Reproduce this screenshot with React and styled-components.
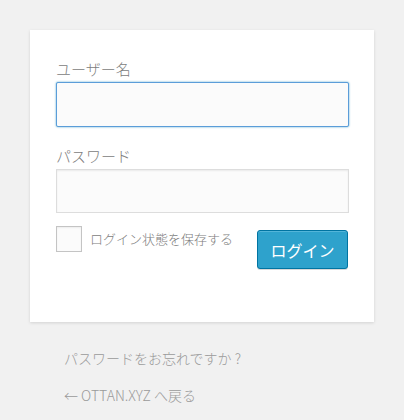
import React from "react";
import styled, { createGlobalStyle } from "styled-components";

const Global = createGlobalStyle`
  html, body { margin: 0; padding: 0; background: #f1f1f1; }
  body { font-family: "Noto Sans CJK JP", "Noto Sans", sans-serif; }
  * { box-sizing: border-box; }
`;

const Page = styled.div`
  padding: 30px 30px 0 30px;
  width: 404px;
`;

const Card = styled.form`
  width: 344px;
  height: 292px;
  background: #fff;
  box-shadow: 0 1px 3px rgba(0, 0, 0, 0.13);
  padding: 29px 25px 0 26px;
  display: flex;
  flex-direction: column;
`;

const Label = styled.label`
  display: block;
  font-size: 15px;
  line-height: 20px;
  font-weight: 300;
  color: #7c7c7c;
  margin-top: ${(p) => p.$mt || 0}px;
`;

const Input = styled.input`
  display: block;
  width: 293px;
  height: ${(p) => (p.$focused ? 45 : 44)}px;
  margin-top: 3px;
  background: #fbfbfb;
  border: 1px solid ${(p) => (p.$focused ? "#5b9dd9" : "#dddddd")};
  border-radius: ${(p) => (p.$focused ? "2px" : "0")};
  box-shadow: ${(p) =>
    p.$focused ? "0 0 2px rgba(30,140,190,0.8)" : "inset 0 1px 2px rgba(0,0,0,0.07)"};
  outline: none;
  font-size: 22px;
  padding: 3px 6px;
`;

const Row = styled.div`
  display: flex;
  justify-content: space-between;
  align-items: flex-start;
  margin-top: 13px;
`;

const Remember = styled.label`
  display: flex;
  align-items: center;
  gap: 8px;
  font-size: 13px;
  line-height: 26px;
  font-weight: 300;
  color: #7c7c7c;
`;

const Check = styled.span`
  display: block;
  width: 26px;
  height: 26px;
  background: #fbfbfb;
  border: 1px solid #c4c4c4;
  box-shadow: inset 0 1px 2px rgba(0, 0, 0, 0.06);
`;

const Button = styled.button`
  margin-top: 4px;
  margin-right: 1px;
  width: 91px;
  height: 39px;
  background: #2ea2cc;
  border: 1px solid #0074a2;
  border-radius: 3px;
  box-shadow: inset 0 1px 0 rgba(120, 200, 230, 0.5), 0 1px 0 rgba(0, 0, 0, 0.15);
  color: #fff;
  font-family: "Noto Sans CJK JP", "Noto Sans", sans-serif;
  font-size: 16px;
  line-height: 20px;
  padding: 0;
`;

const Nav = styled.div`
  padding-left: 34px;
  margin-top: 26px;
  display: flex;
  flex-direction: column;
  gap: 17px;
`;

const LinkText = styled.a`
  font-size: 14px;
  line-height: 20px;
  font-weight: 300;
  color: #9a9a9a;
  text-decoration: none;
`;

export default function App() {
  return (
    <>
      <Global />
      <Page>
        <Card onSubmit={(e) => e.preventDefault()}>
          <Label>ユーザー名</Label>
          <Input $focused type="text" />
          <Label $mt={19}>パスワード</Label>
          <Input type="password" />
          <Row>
            <Remember>
              <Check />
              ログイン状態を保存する
            </Remember>
            <Button type="submit">ログイン</Button>
          </Row>
        </Card>
        <Nav>
          <LinkText href="#">パスワードをお忘れですか ?</LinkText>
          <LinkText href="#">← OTTAN.XYZ へ戻る</LinkText>
        </Nav>
      </Page>
    </>
  );
}
